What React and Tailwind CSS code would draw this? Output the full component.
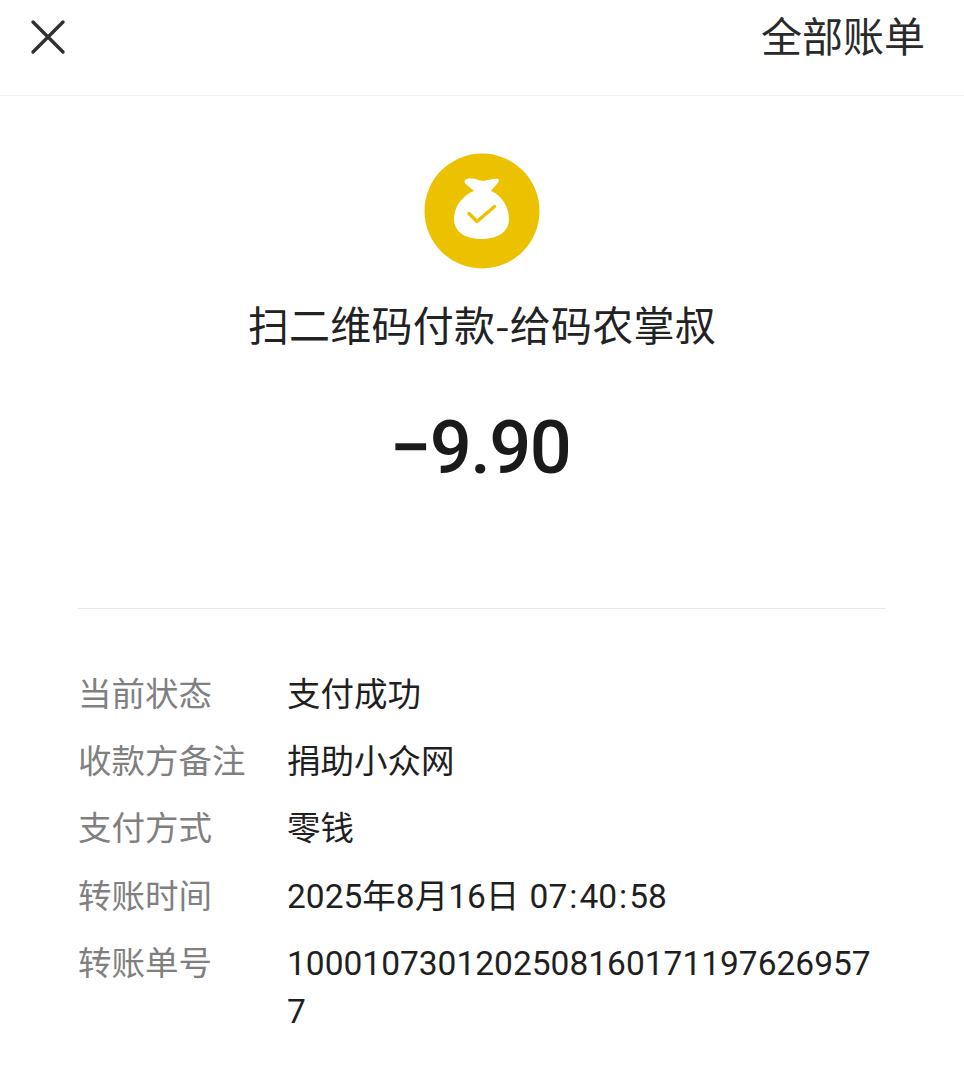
import React from "react";

const CJK = { fontFamily: '"Noto Sans CJK SC", "Noto Sans", sans-serif' };
const DIGITS_FIRST = { fontFamily: '"Roboto", "Noto Sans CJK SC", sans-serif' };

const Colon = () => <span className="mx-[2px]">:</span>;

const rows = [
  ["当前状态", "支付成功"],
  ["收款方备注", "捐助小众网"],
  ["支付方式", "零钱"],
  [
    "转账时间",
    <>
      2025年8月16日 <span className="ml-[2px]">07<Colon />40<Colon />58</span>
    </>,
  ],
  ["转账单号", "10001073012025081601711976269577"],
];

function BagIcon() {
  return (
    <svg width="116" height="116" viewBox="0 0 116 116" className="block">
      <circle cx="58" cy="58" r="57.500" fill="#ecc100" />
      <path
        d="M40.500 28C42 24 50 25 54 27C58 28.500 62 27.500 66 26.500C70 25.500 75.500 25 75 27.500C74.500 30 70 34 67 38C77 42 85 53 85 66C85 80 72 86 57.500 86C43 86 30 80 30 66C30 53 39 42 50 38C46 34 40 31 40.500 28Z"
        fill="#ffffff"
      />
      <path d="M45 60.500L53 68.500L70.500 53.500" fill="none" stroke="#ecc100" strokeWidth="3.400" strokeLinecap="round" strokeLinejoin="round" />
    </svg>
  );
}

export default function App() {
  return (
    <div className="w-[964px] h-[1080px] bg-white overflow-hidden text-[#1c1c1c]" style={CJK}>
      <header className="h-[96px] flex items-center justify-between pl-[30px] pr-[39px] border-b border-[#f1f1f1]">
        <svg width="36" height="36" viewBox="0 0 36 36" className="-mt-[21px]" fill="none" stroke="#303030" strokeWidth="3.400" strokeLinecap="round">
          <path d="M3 3l30 30M33 3L3 33" />
        </svg>
        <span className="text-[41px] leading-[56px] -mt-[27px] text-[#2a2a2a]">全部账单</span>
      </header>

      <section className="flex flex-col items-center pt-[57px]">
        <BagIcon />
        <h1 className="mt-[25px] text-[41px] leading-[58px] tracking-[0.25px] font-normal text-[#222222]">扫二维码付款-给码农掌叔</h1>
        <div className="mt-[51px] mr-[4px] text-[74px] leading-[90px] tracking-[-1.500px] font-medium text-[#1a1a1a]" style={{ fontFamily: '"Roboto", sans-serif' }}>
          −9.90
        </div>
      </section>

      <div className="mx-[78px] mt-[115px] w-[808px] border-t border-[#e8e8e8]" />

      <dl className="mt-[59px] ml-[78px] w-[794px] flex flex-col gap-[16.200px] text-[33.500px] leading-[48px]">
        {rows.map(([label, value]) => (
          <div key={label} className="flex items-baseline">
            <dt className="w-[209px] shrink-0 text-[#808080]">{label}</dt>
            <dd className="flex-1 min-w-0 break-all text-[#1f1f1f]" style={DIGITS_FIRST}>{value}</dd>
          </div>
        ))}
      </dl>
    </div>
  );
}
